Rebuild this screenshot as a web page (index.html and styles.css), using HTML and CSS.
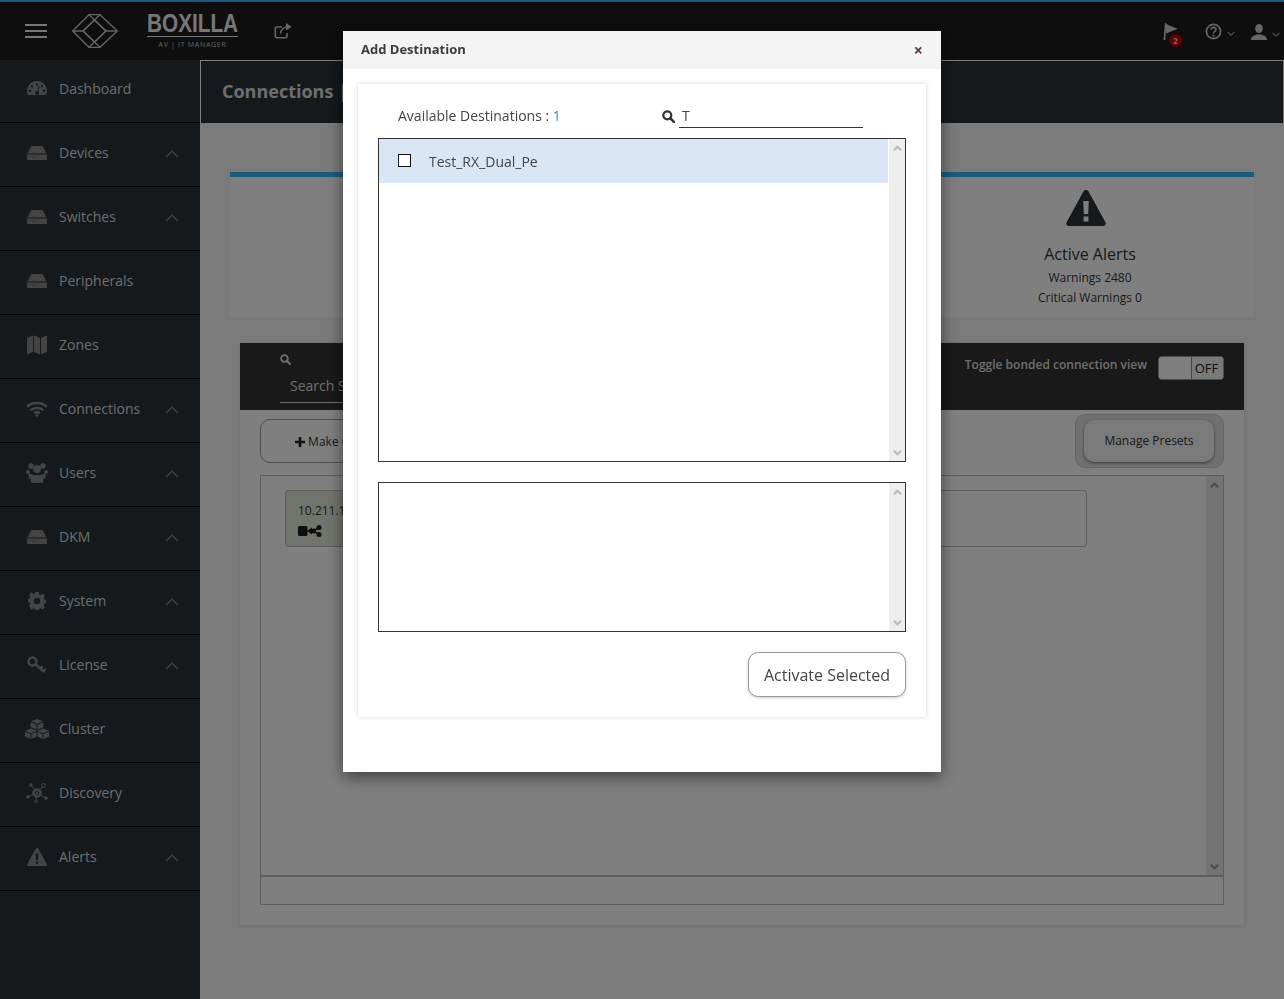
FILE: index.html
```html
<!DOCTYPE html>
<html lang="en">
<head>
<meta charset="utf-8">
<title>Boxilla</title>
<link rel="stylesheet" href="styles.css">
</head>
<body>
<svg class="defs" width="0" height="0" aria-hidden="true">
  <defs>
    <symbol id="i-server" viewBox="0 0 20 14"><path d="M4.500 0h11L19.600 7.500H.4z"/><path fill-rule="evenodd" d="M0 8.500h20V14H0zM1.500 10.800v.8h.8v-.8zM3.500 10.800v.8h.8v-.8zM5.500 10.800v.8h.8v-.8zM7.500 10.800v.8h.8v-.8zM9.500 10.800v.8h.8v-.8z"/></symbol>
    <symbol id="i-alert" viewBox="0 0 20 18"><path fill-rule="evenodd" d="M10 0c.6 0 1 .3 1.300.8l8.400 15.300c.5 1-.1 1.900-1.200 1.900h-17c-1.100 0-1.700-.9-1.200-1.900L8.700.8C9 .3 9.400 0 10 0zM8.600 5.500l.3 6.500h2.200l.3-6.500zM8.800 13.300v2.500h2.400v-2.500z"/></symbol>
    <symbol id="i-chev" viewBox="0 0 14 8"><path d="M1 7l6-6 6 6" fill="none" stroke="currentColor" stroke-width="1.500"/></symbol>
    <symbol id="i-search" viewBox="0 0 14 14"><circle cx="5.700" cy="5.700" r="4.300" fill="none" stroke="currentColor" stroke-width="2.400"/><path d="M8.800 8.800l4 4" stroke="currentColor" stroke-width="2.800" stroke-linecap="round"/></symbol>
    <symbol id="i-scroll" viewBox="0 0 10 7"><path d="M1 5.500l4-4 4 4" fill="none" stroke="currentColor" stroke-width="2.400"/></symbol>
  </defs>
</svg>

<div class="app">
  <header class="topbar">
    <div class="burger"><span></span><span></span><span></span></div>
    <svg class="cube" viewBox="0 0 46 34" fill="none" stroke="#c8c8c8" stroke-width="1.300">
      <path d="M.7 17L17 .7h11L45.300 17 28 33.300H17z"/><path d="M11 17L22.500 6 34 17 22.500 28z"/><path d="M17 .7L34 17 17 33.300M28 .7L11 17l17 16.300M.7 17H11M34 17h11.300"/>
    </svg>
    <div class="brand">
      <div class="brand-name"><span class="brand-word">BOXILLA</span></div>
      <div class="brand-sub">AV | IT MANAGER</div>
    </div>
    <svg class="ext" viewBox="0 0 18 16" fill="none" stroke="#cfcfcf" stroke-width="1.600"><path d="M13 10v3.200a1.500 1.500 0 0 1-1.500 1.500H2.800a1.500 1.500 0 0 1-1.500-1.500V5.500A1.500 1.500 0 0 1 2.800 4H8"/><path d="M6.500 10.500C7 6.500 10 4 13.500 4"/><path d="M12 0l5.500 3.800L12 7.500z" fill="#cfcfcf" stroke="none"/></svg>
    <div class="top-right">
      <div class="flag">
        <svg viewBox="0 0 16 18" width="15" height="17" fill="#cfcfcf"><path d="M2 0h1.400l-.8 18H.6z"/><path d="M3 .5c3 2 8 4 12.500 5.500-3.500 2-9 3.500-12.500 5.500z"/></svg>
        <span class="badge">2</span>
      </div>
      <div class="help">
        <svg viewBox="0 0 18 18" width="17" height="17" fill="none" stroke="#cfcfcf" stroke-width="1.800"><circle cx="9" cy="9" r="7.500"/><path d="M6.400 7c.2-3.200 5.400-3.100 5.300 0 0 2-2.700 1.900-2.700 4" stroke-width="1.700"/><path d="M8 12.500h2v2H8z" fill="#cfcfcf" stroke="none"/></svg>
        <svg class="caret" viewBox="0 0 14 8"><path d="M1 1l6 6 6-6" fill="none" stroke="#a8a8a8" stroke-width="1.800"/></svg>
      </div>
      <div class="user">
        <svg viewBox="0 0 16 16" width="16" height="16" fill="#cfcfcf"><ellipse cx="8" cy="4.500" rx="3.800" ry="4.500"/><path d="M0 16c0-4 3-4 5.500-5.500h5C13 12 16 12 16 16z"/></svg>
        <svg class="caret" viewBox="0 0 14 8"><path d="M1 1l6 6 6-6" fill="none" stroke="#a8a8a8" stroke-width="1.800"/></svg>
      </div>
    </div>
  </header>

  <div class="layout">
    <nav class="sidebar">
      <a class="nav-item"><svg class="nav-icon" viewBox="0 0 20 16"><path fill-rule="evenodd" d="M10 1C4.500 1 0 5.500 0 11c0 1.500.3 2.800.9 4h18.200c.6-1.200.9-2.500.9-4 0-5.500-4.500-10-10-10zM10 3.200a1.200 1.200 0 1 1 0 2.400 1.200 1.200 0 0 1 0-2.400zM5 5a1.200 1.200 0 1 1 0 2.400A1.200 1.200 0 0 1 5 5zM15 5a1.200 1.200 0 1 1 0 2.400A1.200 1.200 0 0 1 15 5zM3 9.500a1.200 1.200 0 1 1 0 2.400 1.200 1.200 0 0 1 0-2.400zM17 9.500a1.200 1.200 0 1 1 0 2.400 1.200 1.200 0 0 1 0-2.400zM11.700 6l.9.3-1.300 5.200a2 2 0 1 1-2.600.2 2 2 0 0 1 1.600-.6z"/></svg><span>Dashboard</span></a>
      <a class="nav-item"><svg class="nav-icon server"><use href="#i-server"/></svg><span>Devices</span><svg class="chev"><use href="#i-chev"/></svg></a>
      <a class="nav-item"><svg class="nav-icon server"><use href="#i-server"/></svg><span>Switches</span><svg class="chev"><use href="#i-chev"/></svg></a>
      <a class="nav-item"><svg class="nav-icon server"><use href="#i-server"/></svg><span>Peripherals</span></a>
      <a class="nav-item"><svg class="nav-icon" viewBox="0 0 20 20"><path d="M0 3l6-2.500V17L0 19.500zM7 .5l6 2.500V19.500L7 17zM14 3l6-2.500V17l-6 2.500z"/></svg><span>Zones</span></a>
      <a class="nav-item"><svg class="nav-icon wide22" viewBox="0 0 22 16"><g class="nav-line" stroke-width="2.600"><path d="M1 5.800c5.500-5 14.500-5 20 0"/><path d="M4.500 9.200c3.500-3 9.500-3 13 0"/><path d="M8 12.200c1.800-1.300 4.200-1.300 6 0"/></g><path d="M11 12.800l2 1.500-2 1.700-2-1.700z"/></svg><span>Connections</span><svg class="chev"><use href="#i-chev"/></svg></a>
      <a class="nav-item"><svg class="nav-icon wide22" viewBox="0 0 22 20"><circle cx="5" cy="3" r="2.800"/><circle cx="17" cy="3" r="2.800"/><circle cx="11" cy="6" r="4"/><circle cx="2" cy="9" r="2"/><circle cx="20" cy="9" r="2"/><path d="M3 11h3c.5 1 1 1.500 1.500 2L3.500 16C2 15 2 12 3 11zM19 11h-3c-.5 1-1 1.500-1.500 2l4 3c1.500-1 1.500-4 .5-5z"/><path d="M6.500 12h9c1.500 0 1.800 2 1.800 4v2c0 1-1 2-2 2H6.700c-1 0-2-1-2-2v-2c0-2 .3-4 1.800-4z"/></svg><span>Users</span><svg class="chev"><use href="#i-chev"/></svg></a>
      <a class="nav-item"><svg class="nav-icon server"><use href="#i-server"/></svg><span>DKM</span><svg class="chev"><use href="#i-chev"/></svg></a>
      <a class="nav-item"><svg class="nav-icon gear" viewBox="0 0 18 18"><path fill-rule="evenodd" d="M7.300 0h3.400l.4 2.400 1.500.7 2-1.400 2.400 2.400-1.400 2 .6 1.500 2.300.4v3.400l-2.300.4-.6 1.500 1.400 2-2.400 2.400-2-1.400-1.500.6-.4 2.300H7.300l-.4-2.300-1.500-.6-2 1.400L1 14.100l1.400-2-.6-1.500L0 10.200V6.800l1.800-.3.6-1.500L1 3l2.400-2.400 2 1.400 1.500-.6zM9 5.800a3 3 0 1 0 0 6.400 3 3 0 0 0 0-6.400z"/></svg><span>System</span><svg class="chev"><use href="#i-chev"/></svg></a>
      <a class="nav-item"><svg class="nav-icon" viewBox="0 0 20 18"><g class="nav-line" stroke-width="2.400"><circle cx="5.500" cy="5.500" r="4"/><path d="M8.500 8.500l9 7.500M13.500 12.500l2-2.300M16.500 15l2-2.300"/></g></svg><span>License</span><svg class="chev"><use href="#i-chev"/></svg></a>
      <a class="nav-item"><svg class="nav-icon wide" viewBox="0 0 24 20"><path d="M12 0l6 2.300-6 2.400-6-2.400zM5.500 3.300l6 2.400v4.800l-6-2.500zM18.500 3.300l-6 2.400v4.800l6-2.500zM6 9.500l6 2.300-6 2.400-6-2.400zM18 9.500l6 2.300-6 2.400-6-2.400zM0 12.800l5.500 2.300V20L0 17.500zM11.500 12.800v4.700L6.500 20v-4.900zM12.500 12.800l5 2.300V20l-5-2.500zM24 12.800v4.700L18.500 20v-4.900z"/></svg><span>Cluster</span></a>
      <a class="nav-item"><svg class="nav-icon wide22" viewBox="0 0 22 20"><g class="nav-line"><circle cx="11" cy="10" r="3.500" stroke-width="2.500"/><circle cx="17.500" cy="2.500" r="2"/><circle cx="10" cy="18.500" r="1.500"/><path d="M5 2l6 8M17.500 2.500L11 10M2 14l9-4M20 15l-9-5M10 18l1-7.500"/></g><circle cx="5" cy="2" r="1.700"/><circle cx="2" cy="14" r="1.800"/><circle cx="20" cy="15" r="1.800"/></svg><span>Discovery</span></a>
      <a class="nav-item"><svg class="nav-icon"><use href="#i-alert"/></svg><span>Alerts</span><svg class="chev"><use href="#i-chev"/></svg></a>
    </nav>

    <main class="main">
      <div class="titlebar"><h1>Connections | Viewer</h1></div>
      <section class="stats">
        <div class="stat"><p class="stat-title">Presets</p></div>
        <div class="stat"><svg class="stat-icon"><use href="#i-alert"/></svg><p class="stat-title">Active Alerts</p><p class="stat-line">Warnings 2480</p><p class="stat-line">Critical Warnings 0</p></div>
      </section>
      <section class="panel">
        <div class="panel-head">
          <div class="search-block">
            <svg class="search-ico"><use href="#i-search"/></svg>
            <div class="search-box">Search Sources</div>
          </div>
          <div class="toggle-block">
            <span class="toggle-label">Toggle bonded connection view</span>
            <div class="toggle"><span class="toggle-knob"></span><span class="toggle-off">OFF</span></div>
          </div>
        </div>
        <div class="panel-body">
          <div class="actions">
            <button class="make"><svg class="plus" viewBox="0 0 10 10"><path d="M3.700 0h2.600v3.700H10v2.600H6.300V10H3.700V6.300H0V3.700h3.700z"/></svg> Make Connection</button>
            <div class="preset-wrap"><button class="preset">Manage Presets</button></div>
          </div>
          <div class="conn-box">
            <div class="chips">
              <div class="chip chip-green">
                <div class="chip-ip">10.211.10.1</div>
                <svg class="chip-ico" viewBox="0 0 24 12" fill="#1d1d1d"><rect y="1" width="9.500" height="10" rx="1.500"/><path d="M9 6l5-3.500v7z"/><circle cx="21" cy="2.500" r="2.500"/><circle cx="21" cy="9.500" r="2.500"/><circle cx="15.500" cy="6" r="2.500"/><path d="M15.500 6L21 2.500M15.500 6L21 9.500" stroke="#1d1d1d" stroke-width="1.600"/></svg>
              </div>
              <div class="chip"></div>
            </div>
            <div class="bar bar-dim"><svg class="bar-arrow"><use href="#i-scroll"/></svg><svg class="bar-arrow down"><use href="#i-scroll"/></svg></div>
          </div>
          <div class="foot-box"></div>
        </div>
      </section>
    </main>
  </div>
</div>

<div class="overlay"></div>

<div class="modal">
  <div class="modal-head">
    <span class="modal-title">Add Destination</span>
    <span class="modal-close">×</span>
  </div>
  <div class="modal-card">
    <div class="filter-row">
      <div class="avail">Available Destinations : <span class="count">1</span></div>
      <svg class="filter-ico"><use href="#i-search"/></svg>
      <div class="filter-input">T</div>
    </div>
    <div class="list list-top">
      <div class="list-rows">
        <div class="row"><span class="check"></span><span>Test_RX_Dual_Pe</span></div>
      </div>
      <div class="bar"><svg class="bar-arrow"><use href="#i-scroll"/></svg><svg class="bar-arrow down"><use href="#i-scroll"/></svg></div>
    </div>
    <div class="list list-bottom">
      <div class="list-rows"></div>
      <div class="bar"><svg class="bar-arrow"><use href="#i-scroll"/></svg><svg class="bar-arrow down"><use href="#i-scroll"/></svg></div>
    </div>
    <div class="modal-actions"><button class="activate">Activate Selected</button></div>
  </div>
</div>
</body>
</html>
```
FILE: styles.css
```css
* { box-sizing: border-box; }
html, body { margin: 0; padding: 0; height: 999px; overflow: hidden; }
body { font-family: "Open Sans", "Liberation Sans", sans-serif; background: #f4f4f4; color: #333; font-size: 14px; }
.defs { position: absolute; }
p, h1 { margin: 0; }
button { font-family: inherit; cursor: pointer; }

.app { display: flex; flex-direction: column; height: 999px; }

/* top bar */
.topbar { height: 60px; flex: none; display: flex; align-items: center; background: #1c1c1c; border-top: 2px solid #36b4ff; padding-left: 25px; }
.burger { width: 22px; display: flex; flex-direction: column; gap: 4px; margin-top: -1px; }
.burger span { display: block; height: 2px; background: #eee; }
.cube { width: 46px; height: 34px; margin-left: 25px; margin-top: -1px; }
.brand { width: 91px; margin-left: 29px; margin-top: 0; display: flex; flex-direction: column; align-items: center; }
.brand-name { width: 100%; font-family: "Liberation Sans", sans-serif; font-weight: 700; font-size: 25px; line-height: 22px; color: #eee; border-bottom: 1px solid #eee; padding-bottom: 2px; white-space: nowrap; }
.brand-word { display: inline-block; transform: scaleX(.83); transform-origin: left center; }
.brand-sub { font-size: 7px; line-height: 11px; letter-spacing: .7px; color: #ccc; margin-top: 2px; white-space: nowrap; }
.ext { width: 18px; height: 16px; margin-left: 36px; margin-top: 0; }
.top-right { margin-left: auto; align-self: stretch; display: flex; align-items: flex-start; }
.flag { position: relative; width: 18px; height: 24px; margin: 21px 24px 0 0; }
.badge { position: absolute; left: 6px; top: 11px; width: 13px; height: 13px; border-radius: 50%; background: #c40000; color: #ddd; font-size: 8px; line-height: 13px; font-weight: 700; text-align: center; }
.help { display: flex; align-items: center; margin: 21px 16px 0 0; }
.user { display: flex; align-items: center; margin: 22px 4px 0 0; }
.caret { width: 8px; height: 5px; margin-left: 5px; margin-top: 4px; }

.layout { flex: 1; display: flex; min-height: 0; }

/* sidebar */
.sidebar { width: 200px; flex: none; background: #2a3238; }
.nav-item { height: 64px; display: flex; align-items: center; padding: 0 20px 4px 0; border-bottom: 1px solid #000; color: #d9d9d9; font-size: 14px; }
.nav-item:first-child { height: 63px; padding-bottom: 6px; }
.nav-icon { width: 20px; height: 20px; margin-left: 27px; margin-right: 12px; fill: #888; flex: none; }
.nav-icon.gear { width: 18px; height: 18px; margin-left: 28px; margin-right: 13px; }
.nav-icon.server { height: 14px; }
.nav-icon.wide { width: 24px; margin-left: 25px; margin-right: 10px; }
.nav-icon.wide22 { width: 22px; margin-left: 26px; margin-right: 11px; }
.nav-line { fill: none; stroke: #888; }
.chev { width: 14px; height: 8px; margin-left: auto; margin-right: 1px; margin-top: 2px; color: #7a7a7a; }

/* main */
.main { flex: 1; min-width: 0; }
.titlebar { height: 63px; background: #2a3238; border: 1px solid #fff; border-bottom: 0; display: flex; align-items: center; padding-left: 21px; }
.titlebar h1 { font-size: 18px; line-height: 24px; font-weight: 700; color: #ddd; white-space: nowrap; padding-bottom: 3px; }

.stats { margin: 49px 30px 0; height: 145px; background: #fff; border-top: 5px solid #36b4ff; display: flex; justify-content: space-between; }
.stat { text-align: center; }
.stat:first-child { width: 220px; padding-top: 67px; }
.stat:first-child .stat-title { padding-left: 200px; white-space: nowrap; margin: 0; }
.stat:last-child { width: 328px; padding-top: 13px; }
.stat-icon { display: block; width: 40px; height: 36px; margin-left: 140px; fill: #2a3238; }
.stat-title { font-size: 16px; line-height: 22px; color: #333; margin: 17px 0 3px; }
.stat-line { font-size: 12px; line-height: 20px; color: #333; }

.panel { margin: 26px 40px 0; height: 582px; background: #fff; box-shadow: 0 0 3px rgba(0,0,0,.1); }
.panel-head { height: 67px; background: #333; display: flex; justify-content: space-between; padding: 0 20px 0 40px; }
.search-block { width: 140px; padding-top: 11px; }
.search-ico { display: block; width: 11px; height: 11px; color: #ddd; }
.search-box { margin-top: 4px; height: 34px; border-bottom: 1px solid #ddd; color: #ddd; padding: 7px 0 0 10px; line-height: 19px; font-size: 14px; white-space: nowrap; }
.toggle-block { display: flex; align-items: flex-start; padding-top: 13px; }
.toggle-label { font-size: 12px; font-weight: 600; color: #ddd; line-height: 17px; }
.toggle { width: 66px; height: 24px; margin-left: 11px; border-radius: 4px; border: 1px solid #999; background: #fff; display: flex; overflow: hidden; }
.toggle-knob { width: 33px; background: #fff; border-right: 1px solid #888; }
.toggle-off { flex: 1; font-size: 13px; line-height: 22px; text-align: center; color: #222; background: #f2f2f2; padding-right: 2px; }

.panel-body { padding: 4px 20px 0; }
.actions { display: flex; justify-content: space-between; align-items: center; height: 54px; }
.make { width: 240px; height: 44px; padding: 0 0 0 34px; text-align: left; border: 1px solid #999; border-radius: 10px; background: #fff; font-size: 12px; color: #333; }
.plus { width: 10px; height: 10px; fill: #222; vertical-align: -1px; }
.preset-wrap { width: 149px; height: 54px; padding: 5px 8px; border-radius: 10px; background: #e0e0e0; border: 1px solid #ccc; }
.preset { display: block; width: 130px; height: 42px; padding: 0 0 2px; border: 0; border-radius: 10px; background: #f4f4f4; box-shadow: 0 1px 3px rgba(0,0,0,.5); font-size: 12px; color: #333; }
.conn-box { margin-top: 7px; height: 401px; border: 1px solid #bbb; display: flex; }
.chips { flex: 1; display: flex; padding: 14px 119px 0 24px; align-items: flex-start; min-width: 0; }
.chip { flex: 1; height: 57px; border: 1px solid #bbb; border-left: 0; border-radius: 0 4px 4px 0; background: #fff; }
.chip-green { flex: none; width: 300px; padding: 11px 0 0 12px; border: 1px solid #bbb; border-right: 0; border-radius: 4px 0 0 4px; background: #e2e8d6; font-size: 12px; line-height: 17px; color: #333; }
.chip-ico { display: block; width: 24px; height: 12px; margin-top: 6px; }
.foot-box { height: 30px; border: 1px solid #bbb; border-top-width: 2px; margin-top: -1px; }

.bar { width: 16px; flex: none; background: #eee; display: flex; flex-direction: column; justify-content: space-between; align-items: center; padding: 6px 0 5px; color: #bbb; }
.bar-dim { width: 17px; background: #e8e8e8; color: #999; }
.bar-arrow { width: 9px; height: 7px; }
.bar-arrow.down { transform: rotate(180deg); }

/* overlay and dialog */
.overlay { position: fixed; inset: 0; background: rgba(0,0,0,.5); }
.modal { position: fixed; left: 343px; top: 31px; width: 598px; height: 741px; background: #fff; box-shadow: 0 5px 15px rgba(0,0,0,.5); }
.modal-head { height: 38px; background: #f4f4f4; display: flex; align-items: center; justify-content: space-between; padding: 0 18px; }
.modal-title { font-size: 13px; font-weight: 700; color: #3c3c3c; line-height: 19px; padding-bottom: 1px; }
.modal-close { font-size: 16px; font-weight: 700; line-height: 16px; color: #5a3f3a; }
.modal-card { margin: 15px 15px 0; height: 633px; padding: 0 20px; background: #fff; box-shadow: 0 0 4px rgba(0,0,0,.18); }
.filter-row { height: 54px; display: flex; align-items: flex-start; padding-top: 22px; }
.avail { width: 284px; padding-left: 20px; font-size: 14px; line-height: 19px; color: #444; white-space: nowrap; }
.count { color: #3d8fc9; }
.filter-ico { width: 13px; height: 13px; margin-top: 4px; color: #333; }
.filter-input { width: 184px; height: 22px; margin-left: 4px; padding-left: 3px; border-bottom: 1px solid #333; font-size: 14px; line-height: 19px; color: #444; }
.list { border: 1px solid #333; display: flex; background: #fff; }
.list-top { height: 324px; }
.list-bottom { height: 150px; margin-top: 20px; }
.list-rows { flex: 1; min-width: 0; }
.row { height: 44px; background: #d9e6f5; display: flex; align-items: center; padding-left: 19px; margin-right: 1px; font-size: 14px; color: #444; }
.check { width: 13px; height: 13px; border: 1px solid #111; background: #fff; margin-right: 18px; margin-top: -2px; }
.modal-actions { display: flex; justify-content: flex-end; margin-top: 20px; }
.activate { width: 158px; height: 45px; padding: 0; border: 1px solid #999; border-radius: 10px; background: #fff; font-size: 16px; color: #444; box-shadow: 0 1px 3px rgba(0,0,0,.2); }
```
